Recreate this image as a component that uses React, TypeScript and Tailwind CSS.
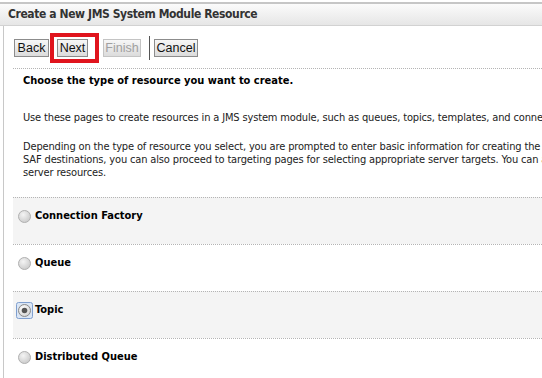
import React from "react";

const FONT = "font-['DejaVu_Sans_Condensed','DejaVu_Sans',Tahoma,sans-serif]";

function Radio({ checked = false }: { checked?: boolean }) {
  if (checked) {
    return (
      <svg width="17" height="17" viewBox="0 0 17 17" className="-ml-[2px] mr-[2px]">
        <rect x="0.5" y="0.5" width="16" height="16" rx="2" fill="#dbe6f5" stroke="#7f9fcf" />
        <defs>
          <radialGradient id="rs" cx="40%" cy="35%" r="70%">
            <stop offset="0" stopColor="#ffffff" />
            <stop offset="1" stopColor="#d2d2d2" />
          </radialGradient>
        </defs>
        <circle cx="8.5" cy="8.5" r="6" fill="url(#rs)" stroke="#8a8a8a" />
        <circle cx="8.5" cy="8.5" r="2.8" fill="#555" />
      </svg>
    );
  }
  return (
    <svg width="13" height="13" viewBox="0 0 13 13" className="mr-[4px]">
      <defs>
        <radialGradient id="ru" cx="40%" cy="35%" r="70%">
          <stop offset="0" stopColor="#f4f4f4" />
          <stop offset="1" stopColor="#c9c9c9" />
        </radialGradient>
      </defs>
      <circle cx="6.5" cy="6.5" r="6" fill="url(#ru)" stroke="#b0b0b0" />
    </svg>
  );
}

function Btn({ label, width, disabled = false }: { label: string; width: string; disabled?: boolean }) {
  return (
    <button
      className={`${width} h-[18px] border bg-gradient-to-b from-[#f7f7f7] to-[#dcdcdc] font-['Liberation_Sans',Arial,sans-serif] text-[12.5px] leading-[16px] text-center ${
        disabled ? "border-[#c4c4c4] text-[#a0a0a0]" : "border-[#8c8c8c] text-[#111]"
      }`}
    >
      {label}
    </button>
  );
}

const rows = [
  { label: "Connection Factory", shade: true },
  { label: "Queue", shade: false },
  { label: "Topic", shade: true, checked: true },
  { label: "Distributed Queue", shade: false },
];

export default function App() {
  return (
    <div className={`w-[542px] h-[378px] overflow-hidden bg-white ${FONT} text-[#222]`}>
      <div className="mt-[2px] h-[24px] border-t-2 border-b border-t-[#c6c6c6] border-b-[#d2d2d2] bg-gradient-to-b from-[#fbfbfb] to-[#e6e6e6] pl-[8px] text-[12px] tracking-[-0.4px] font-bold leading-[21px] text-[#333] whitespace-nowrap">
        Create a New JMS System Module Resource
      </div>
      <div className="ml-[3px] border-l border-[#c8c8c8] pl-[9px] h-[400px]">
        <div className="flex items-center h-[42px] pt-[1px]">
          <div className="ml-[1px] flex">
            <Btn label="Back" width="w-[35px]" />
          </div>
          <div className="ml-[1px] border-4 border-[#e0141d] pl-[3px] pr-[7px] py-[2px] flex">
            <Btn label="Next" width="w-[31px]" />
          </div>
          <div className="ml-[4px] flex">
            <Btn label="Finish" width="w-[38px]" disabled />
          </div>
          <div className="ml-[8px] w-px h-[24px] bg-[#555]" />
          <div className="ml-[4px] flex">
            <Btn label="Cancel" width="w-[44px]" />
          </div>
        </div>
        <div className="border-t border-dotted border-[#b4b4b4]">
          <div className="pl-[10px] whitespace-nowrap text-[11px] tracking-[-0.15px]">
            <div className="h-[24px] leading-[24px] font-bold text-[11px] tracking-normal text-black">
              Choose the type of resource you want to create.
            </div>
            <div className="mt-[18px] leading-[13px]">
              Use these pages to create resources in a JMS system module, such as queues, topics, templates, and connection factories.
            </div>
            <div className="mt-[16px] leading-[13px]">
              Depending on the type of resource you select, you are prompted to enter basic information for creating the resource.
              <br />
              SAF destinations, you can also proceed to targeting pages for selecting appropriate server targets. You can also
              <br />
              server resources.
            </div>
          </div>
          <div className="mt-[18px]">
            {rows.map((r) => (
              <div
                key={r.label}
                className={`h-[47px] border-t border-dotted border-[#b4b4b4] flex items-start pt-[11px] pl-[5px] ${
                  r.shade ? "bg-[#f4f4f4]" : "bg-white"
                }`}
              >
                <div className="flex items-center h-[14px]">
                  <Radio checked={r.checked} />
                  <span className="text-[11px] font-bold text-black leading-[14px]">{r.label}</span>
                </div>
              </div>
            ))}
          </div>
        </div>
      </div>
    </div>
  );
}
